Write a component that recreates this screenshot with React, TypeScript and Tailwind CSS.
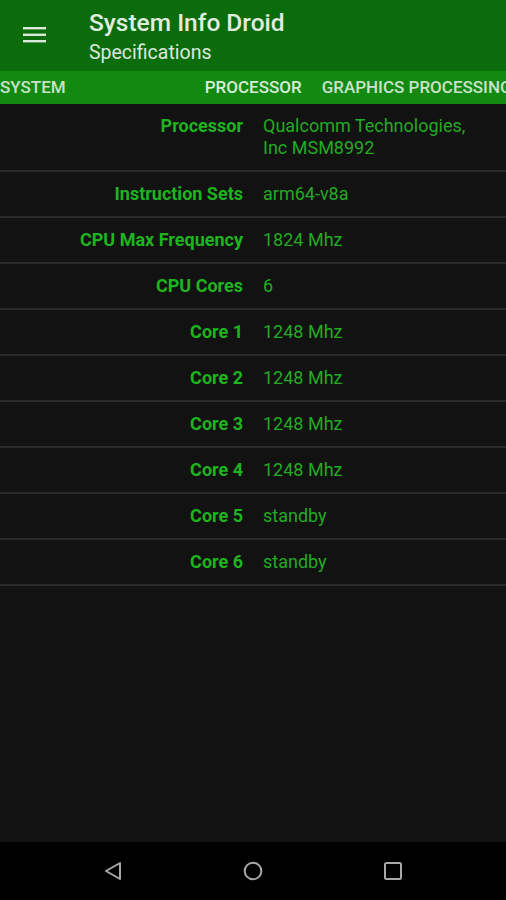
import React from "react";

const rows: [string, string][] = [
  ["Processor", "Qualcomm Technologies, Inc MSM8992"],
  ["Instruction Sets", "arm64-v8a"],
  ["CPU Max Frequency", "1824 Mhz"],
  ["CPU Cores", "6"],
  ["Core 1", "1248 Mhz"],
  ["Core 2", "1248 Mhz"],
  ["Core 3", "1248 Mhz"],
  ["Core 4", "1248 Mhz"],
  ["Core 5", "standby"],
  ["Core 6", "standby"],
];

export default function App() {
  return (
    <div
      className="w-[506px] h-[900px] flex flex-col bg-[#121212] overflow-hidden"
      style={{ fontFamily: "Roboto, 'Noto Sans', sans-serif" }}
    >
      <div className="h-[71px] bg-[#0b6c0b] flex items-start shrink-0">
        <div className="w-[89px] flex justify-center pt-[26px] pr-[20px]">
          <svg width="24" height="18" viewBox="0 0 24 18">
            <rect x="0" y="1" width="23" height="2.4" fill="#dbe8db" />
            <rect x="0" y="7.6" width="23" height="2.4" fill="#dbe8db" />
            <rect x="0" y="14" width="23" height="2.4" fill="#dbe8db" />
          </svg>
        </div>
        <div className="flex flex-col pt-[8px]">
          <div className="text-[24.5px] leading-[30px] font-medium text-[#e0ece0]">System Info Droid</div>
          <div className="text-[19.5px] leading-[24px] text-[#dce8dc] mt-[3px]">Specifications</div>
        </div>
      </div>
      <div className="h-[33px] bg-[#128a12] flex items-center overflow-hidden whitespace-nowrap shrink-0 text-[17px] font-medium text-[#c9e2c9]">
        <span className="ml-[0px]">SYSTEM</span>
        <span className="ml-[139px] text-[#d8ecd8]">PROCESSOR</span>
        <span className="ml-[20px]">GRAPHICS PROCESSING</span>
      </div>
      <div className="flex-1 flex flex-col">
        {rows.map(([k, v]) => (
          <div key={k} className="flex border-b-2 border-[#2a2a2a] py-[11px] leading-[22px] text-[18px]">
            <div className="w-[243px] shrink-0 text-right font-bold text-[#1fb31f]">{k}</div>
            <div className="ml-[20px] pr-[16px] w-[243px] text-[#22aa22]">{v}</div>
          </div>
        ))}
      </div>
      <div className="h-[58px] bg-black flex items-center justify-center shrink-0">
        <div className="flex w-[300px] justify-between items-center">
          <svg width="20" height="20" viewBox="0 0 20 20">
            <path d="M17 2 L17 18 L3 10 Z" fill="none" stroke="#a8a8a8" strokeWidth="2" strokeLinejoin="round" />
          </svg>
          <svg width="20" height="20" viewBox="0 0 20 20">
            <circle cx="10" cy="10" r="8.3" fill="none" stroke="#a8a8a8" strokeWidth="2" />
          </svg>
          <svg width="20" height="20" viewBox="0 0 20 20">
            <rect x="2" y="2" width="16" height="16" rx="1.5" fill="none" stroke="#a8a8a8" strokeWidth="2" />
          </svg>
        </div>
      </div>
    </div>
  );
}
